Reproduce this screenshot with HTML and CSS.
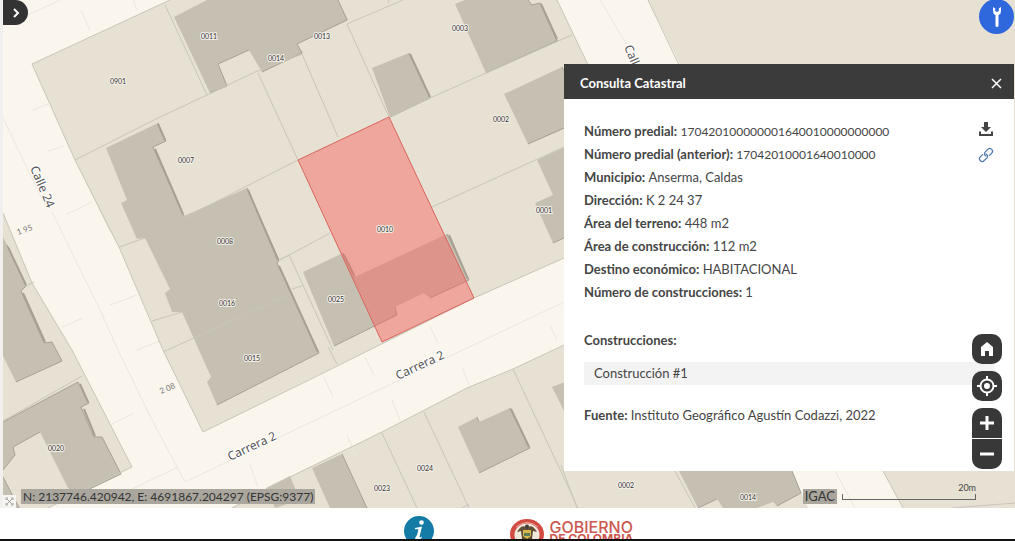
FILE: index.html
```html
<!DOCTYPE html>
<html lang="es">
<head>
<meta charset="utf-8">
<title>Consulta Catastral</title>
<link rel="stylesheet" href="styles.css">
</head>
<body>
<main class="map">
  <svg class="map-canvas" viewBox="3 0 1012 508" preserveAspectRatio="xMidYMid slice" role="img" aria-label="Mapa catastral">
    <!-- blocks -->
    <g class="parcel">
      <path d="M32 64 170 0H557L589 67 640 223 564 258 474 298 203 432 163 350 119 247 107 226 75 160Z"/>
      <path d="M648 0H1015V508H903L883 471Z"/>
      <path d="M232 508 290 477 380 433 467 388 513 369 564 345 740 300 792 471 808 508Z"/>
      <path d="M3 213 32 283 72 350 132 467 48 508H3Z"/>
    </g>
    <!-- road axes and cross marks -->
    <g class="road-line">
      <path d="M0 112 45 205M52 212 100 310 118 350 150 416 185 482 564 302M28 15 60 0M81 10 90 30M133 0 137 10M33 110 48 104M48 151 64 146M67 214 92 202M62 327 83 318M110 305 137 295M137 350 160 341M110 425 134 413M130 490 178 467M250 465 258 487M347 435 357 458M392 400 400 420M430 326 438 343M462 367 469 385M324 377 333 397M365 357 374 375M550 325 557 340M600 0 630 50M835 471 855 508"/>
    </g>
    <!-- buildings -->
    <g class="building">
      <path d="M174 17 207 0H338L348 20 297 44 303 53 262 72 249 50 218 64 227 86 210 93Z"/>
      <path d="M372 68 409 53 430 98 390 117Z"/>
      <path d="M455 4 465 0H528L532 5 540 3 558 41 486 73Z"/>
      <path d="M504 94 562 67 590 118 528 144Z"/>
      <path d="M537 160 580 140 600 222 553 243 535 203 553 195Z"/>
      <path d="M106 148 158 123 166 141 153 147 184 216 247 188 279 260 277 263 319 353 217 405 207 382 211 377 182 312 172 312 165 293 170 289 145 238 137 239 121 203 127 200Z"/>
      <path d="M303 272 343 253 355 277 447 234 469 280 430 298 424 293 395 307 397 315 334 346Z"/>
      <path d="M3 237 7 245 26 286 21 291 44 343 52 342 62 361 16 382 3 356Z"/>
      <path d="M3 422 78 382 89 403 81 407 94 437 102 437 121 474 77 495 68 488 40 432 13 447 15 455 3 470Z"/>
      <path d="M3 477 20 508H3Z"/>
      <path d="M266 488 290 476 300 500 275 508Z"/>
      <path d="M312 468 342 454 367 508H330Z"/>
      <path d="M458 427 477 417 479 422 510 408 530 448 479 473Z"/>
      <path d="M552 387 570 380V423Z"/>
      <path d="M679 471H792L801 493 777 506 773 502 757 508H723L717 499 698 508Z"/>
    </g>
    <g class="shade">
      <path d="M338 0 347 20 297 44 302 53 262 72M249 50 218 64 227 86 210 93M409 53 430 98 390 117M528 0 532 5 540 3 557 41 486 73M562 67 564 71M564 128 528 144M158 123 166 141 153 147 184 216M247 188 279 260 277 263 319 353 217 405M343 253 355 277M447 234 469 280 430 298M395 307 397 315 334 346M7 245 26 286 21 291 44 343 52 342 62 361 16 382M3 422 78 382 89 403 81 407 94 437 102 437 121 474 77 495M40 432 13 447 15 455 3 470M3 477 19 508M342 454 367 508M477 417 479 422M510 408 530 448 479 473M564 238 553 243M792 471 801 493 777 506M717 499 698 508"/>
    </g>
    <g class="shade-wide"><path d="M158 124 165 140M155 149 183 214M410 54 430 97M541 4 557 39M248 190 278 260M279 266 318 352M449 235 468 279M344 255 354 275M8 247 26 285M23 293 45 342M511 409 529 447M80 384 88 402M84 409 95 436"/></g>
    <!-- parcel limits -->
    <g class="limit">
      <path d="M75 160 158 118 207 95 255 72 302 54M165 5 207 95M258 73 298 160M302 54 338 137M347 24 389 117M347 24 403 0M389 0 388 3M389 117 430 98 486 73 572 35M432 207 564 147M184 218 298 160M280 260 330 233M289 255 333 350M279 260 289 255M292 289 302 286M119 247 145 238M152 321 182 312M163 352 290 294M328 347 337 364M3 421 82 376M26 286 34 282M382 433 417 508M424 412 469 508M513 369 578 508M561 465 577 508M675 471 695 508M952 508 1015 503M462 508 469 504"/>
      <path d="M170 0 32 64 75 160 119 247 163 350 203 432 307 381 474 298 564 258M557 0 589 67M648 0 680 67M883 471 903 508M232 508 290 477 380 433 467 388 513 369 564 345M3 213 32 283 72 350 132 467 48 508"/>
    </g>
    <path class="selected" d="M298 160 389 117 474 298 382 342Z"/>
    <!-- parcel numbers -->
    <g class="parcel-no">
      <text x="118" y="84">0901</text><text x="209" y="39">0011</text><text x="276" y="61">0014</text>
      <text x="322" y="39">0013</text><text x="460" y="31">0003</text><text x="501" y="122">0002</text>
      <text x="186" y="163">0007</text><text x="544" y="213">0001</text><text x="385" y="232">0010</text>
      <text x="225" y="244">0008</text><text x="227" y="306">0016</text><text x="336" y="302">0025</text>
      <text x="252" y="361">0015</text><text x="56" y="451">0020</text><text x="382" y="491">0023</text>
      <text x="425" y="471">0024</text><text x="626" y="488">0002</text><text x="748" y="500">0014</text>
    </g>
    <g class="street">
      <text transform="translate(30 168) rotate(67)">Calle 24</text>
      <text transform="translate(230 461) rotate(-25)">Carrera 2</text>
      <text transform="translate(398 380) rotate(-25)">Carrera 2</text>
      <text transform="translate(624 47) rotate(67)">Calle 24</text>
    </g>
    <g class="street-no">
      <text transform="translate(18 235) rotate(-20)">1 95</text>
      <text transform="translate(161 394) rotate(-23)">2 08</text>
    </g>
  </svg>

  <button class="side-toggle" aria-label="Abrir panel"><svg width="8" height="10" viewBox="0 0 8 10"><path d="M2 1 6 5 2 9" fill="none" stroke="#fff" stroke-width="2"/></svg></button>
  <button class="tools" aria-label="Herramientas"><svg width="10" height="22" viewBox="0 0 10 22"><path d="M1 1V5Q1 8 3.500 9V19.500Q3.500 21 5 21T6.500 19.500V9Q9 8 9 5V1L6.800 2.500V5L5 6 3.200 5V2.500Z" fill="#fff"/></svg></button>

  <section class="panel" aria-labelledby="panel-title">
    <header class="panel-head">
      <h1 class="panel-title" id="panel-title">Consulta Catastral</h1>
      <button class="close" aria-label="Cerrar"><svg width="11" height="11" viewBox="0 0 11 11"><path d="M1 1 10 10M10 1 1 10" stroke="#fff" stroke-width="1.500"/></svg></button>
    </header>
    <div class="panel-body">
      <div class="summary">
        <dl class="facts">
          <div><dt>Número predial:</dt> <dd class="code">170420100000001640010000000000</dd></div>
          <div><dt>Número predial (anterior):</dt> <dd class="code">17042010001640010000</dd></div>
          <div><dt>Municipio:</dt> <dd>Anserma, Caldas</dd></div>
          <div><dt>Dirección:</dt> <dd>K 2 24 37</dd></div>
          <div><dt>Área del terreno:</dt> <dd>448 m2</dd></div>
          <div><dt>Área de construcción:</dt> <dd>112 m2</dd></div>
          <div><dt>Destino económico:</dt> <dd>HABITACIONAL</dd></div>
          <div><dt>Número de construcciones:</dt> <dd>1</dd></div>
        </dl>
        <div class="actions">
          <button aria-label="Descargar"><svg width="16" height="16" viewBox="0 0 16 16"><path d="M6 1H10V6H13L8 11 3 6H6Z" fill="#444"/><path d="M2 10.500V14H14V10.500" fill="none" stroke="#444" stroke-width="2"/></svg></button>
          <button aria-label="Copiar enlace"><svg width="16" height="16" viewBox="0 0 16 16"><g transform="rotate(-45 8 8)" fill="none" stroke="#5078ad" stroke-width="1.300"><path d="M6.500 5.300H2.700A2.700 2.700 0 0 0 2.700 10.700H6.300A2.700 2.700 0 0 0 8.700 7"/><path d="M9.500 10.700H13.300A2.700 2.700 0 0 0 13.300 5.300H9.700A2.700 2.700 0 0 0 7.300 9"/></g></svg></button>
        </div>
      </div>
      <h2 class="subtitle">Construcciones:</h2>
      <button class="accordion">Construcción #1</button>
      <p class="source"><strong>Fuente:</strong> Instituto Geográfico Agustín Codazzi, 2022</p>
    </div>
  </section>

  <nav class="controls" aria-label="Controles del mapa">
    <button class="control" aria-label="Inicio"><svg width="14" height="14" viewBox="0 0 14 14"><path d="M7 0 13 5V14H9V9H5V14H1V5Z" fill="#fff"/></svg></button>
    <button class="control" aria-label="Mi ubicación"><svg width="20" height="20" viewBox="0 0 20 20"><g fill="none" stroke="#fff" stroke-width="2"><circle cx="10" cy="10" r="6.500"/><path d="M10 0V4M10 16V20M0 10H4M16 10H20"/></g><circle cx="10" cy="10" r="3" fill="#fff"/></svg></button>
    <div class="zoom">
      <button aria-label="Acercar"><svg width="16" height="16" viewBox="0 0 16 16"><path d="M8 1V15M1 8H15" stroke="#fff" stroke-width="3"/></svg></button>
      <button aria-label="Alejar"><svg width="16" height="16" viewBox="0 0 16 16"><path d="M1 8H15" stroke="#fff" stroke-width="3"/></svg></button>
    </div>
  </nav>

  <div class="status">
    <button class="expand" aria-label="Ampliar"><svg width="9" height="9" viewBox="0 0 9 9"><path d="M1 3V1H3M6 1H8V3M8 6V8H6M3 8H1V6M2 2 7 7M7 2 2 7" fill="none" stroke="#888" stroke-width="0.800"/></svg></button>
    <span class="tag coords">N: 2137746.420942, E: 4691867.204297 (EPSG:9377)</span>
    <span class="tag">IGAC</span>
    <span class="scale">20m</span>
  </div>
</main>
<footer class="footer">
  <svg class="info" width="30" height="30" viewBox="0 0 30 30" role="img" aria-label="Información"><circle cx="15" cy="15" r="15" fill="#147aa6"/><circle cx="17.500" cy="6.500" r="2.300" fill="#fff"/><path d="M11 12Q15 11 18 10.500L15.500 21Q15.500 22 18 20.500L17.500 22Q14 25.500 12 24T13 19L14.500 13.200H11Z" fill="#fff"/></svg>
  <div class="brand">
    <svg width="34" height="30" viewBox="0 0 34 30" aria-hidden="true"><ellipse cx="17" cy="15" rx="17" ry="15" fill="#d14b43"/><ellipse cx="17" cy="16" rx="12.500" ry="11.500" fill="#f0e8dc"/><path d="M7 13Q12 4 17 9 22 4 27 13L23 12 22 20H12L11 12Z" fill="#5e4f37"/><path d="M13 11H21V17L17 20 13 17Z" fill="#d8b74b"/><path d="M14 14H20V17H14Z" fill="#587c58"/><circle cx="17" cy="7.500" r="2" fill="#403c35"/><path d="M6 8Q17-1 28 8" fill="none" stroke="#edaaa1"/></svg>
    <p class="brand-name">GOBIERNO<span>DE COLOMBIA</span></p>
  </div>
</footer>
</body>
</html>
```
FILE: styles.css
```css
* { box-sizing: border-box; }

body {
  margin: 0;
  height: 100vh;
  display: flex;
  flex-direction: column;
  background: #fff;
  color: #454545;
  font: 13px/23px Lato, "Open Sans", sans-serif;
}

button {
  display: grid;
  place-items: center;
  margin: 0;
  padding: 0;
  border: 0;
  background: none;
  color: inherit;
  font: inherit;
  cursor: pointer;
}

.map {
  position: relative;
  flex: 1;
  min-height: 0;
  overflow: hidden;
  border-left: 3px solid #f1f0ee;
  background: #faf5ed;
}

.map-canvas { display: block; width: 100%; height: 100%; }
.parcel { fill: #e7e1d3; }
.building { fill: #c6c0b3; }
.shade { fill: none; stroke: #a7a195; stroke-width: 1; }
.shade-wide { fill: none; stroke: #a7a195; stroke-width: 2; }
.limit { fill: none; stroke: #c9c5b8; stroke-width: 1; }
.road-line { fill: none; stroke: #ebe7df; stroke-width: 1; }
.selected { fill: rgb(248 95 88 / 45%); stroke: #d9655d; stroke-width: 1; }

.parcel-no {
  font-size: 7px;
  text-anchor: middle;
  fill: #333;
  stroke: #f4f0e9;
  stroke-width: 2px;
  paint-order: stroke;
}

.street {
  font: 12px "Noto Sans", sans-serif;
  fill: #555;
  stroke: #fff;
  stroke-width: 2px;
  paint-order: stroke;
}

.street-no { font-size: 8px; fill: #777; }

.side-toggle {
  position: absolute;
  top: 0;
  left: 0;
  width: 25px;
  height: 25px;
  border-radius: 0 13px 13px 0;
  background: #333;
}

.tools {
  position: absolute;
  top: -1px;
  right: 1px;
  width: 35px;
  height: 35px;
  border-radius: 50%;
  background: #2f68dc;
}

.panel {
  position: absolute;
  top: 64px;
  right: 1px;
  width: 450px;
  background: #fff;
}

.panel-head {
  display: flex;
  align-items: center;
  justify-content: space-between;
  height: 35px;
  padding: 3px 12px 0 16px;
  background: #3b3b3b;
  color: #fff;
}

.panel-title { margin: 0; font-size: 13px; font-weight: 700; }
.panel-body { padding: 21px 20px 44px; }
.summary { display: flex; justify-content: space-between; }
.facts { margin: 0; }
.facts dt, .facts dd { display: inline; margin: 0; }
.facts dt { font-weight: 700; }
.facts .code { font-size: 12px; }

.actions {
  display: flex;
  flex-direction: column;
  gap: 10px;
  padding-top: 1px;
}

.subtitle { margin: 25px 0 10px; font-size: 13px; }

.accordion {
  display: block;
  width: 100%;
  padding: 0 10px;
  background: #f3f3f3;
  text-align: left;
}

.source { margin: 19px 0 0; }

.controls {
  position: absolute;
  right: 13px;
  bottom: 39px;
  display: flex;
  flex-direction: column;
  gap: 7px;
}

.control {
  width: 30px;
  height: 30px;
  border-radius: 10px;
  background: #383838;
}

.zoom {
  display: grid;
  gap: 1px;
  overflow: hidden;
  border-radius: 10px;
}

.zoom button { width: 30px; height: 30px; background: #383838; }

.status {
  position: absolute;
  right: 39px;
  bottom: 0;
  left: 0;
  display: flex;
  align-items: flex-end;
}

.expand { width: 13px; height: 13px; margin-right: 5px; background: #f7f5f1; }

.tag {
  margin-bottom: 4px;
  padding: 0 2px;
  background: #aaa69e;
  color: #333;
  line-height: 15px;
}

.coords { margin-right: auto; font-size: 12px; }

.scale {
  width: 134px;
  height: 17px;
  margin: 0 0 8px 5px;
  background: linear-gradient(#666, #666) left bottom / 1px 5px no-repeat,
    linear-gradient(#666, #666) right bottom / 1px 5px no-repeat;
  border-bottom: 1px solid #666;
  font-size: 9px;
  line-height: 9px;
  text-align: right;
}

.footer {
  display: flex;
  gap: 76px;
  height: 33px;
  padding: 8px 0 0 calc(50% - 104px);
  overflow: hidden;
  border-bottom: 2px solid #111;
}

.info, .brand svg { flex: none; }
.brand { display: flex; gap: 6px; padding-top: 3px; }

.brand-name {
  margin: 0;
  padding-top: 2px;
  color: #cc5850;
  font: 500 16px/12px Inter, sans-serif;
}

.brand-name span { display: block; font-size: 12px; font-weight: 700; }
```
